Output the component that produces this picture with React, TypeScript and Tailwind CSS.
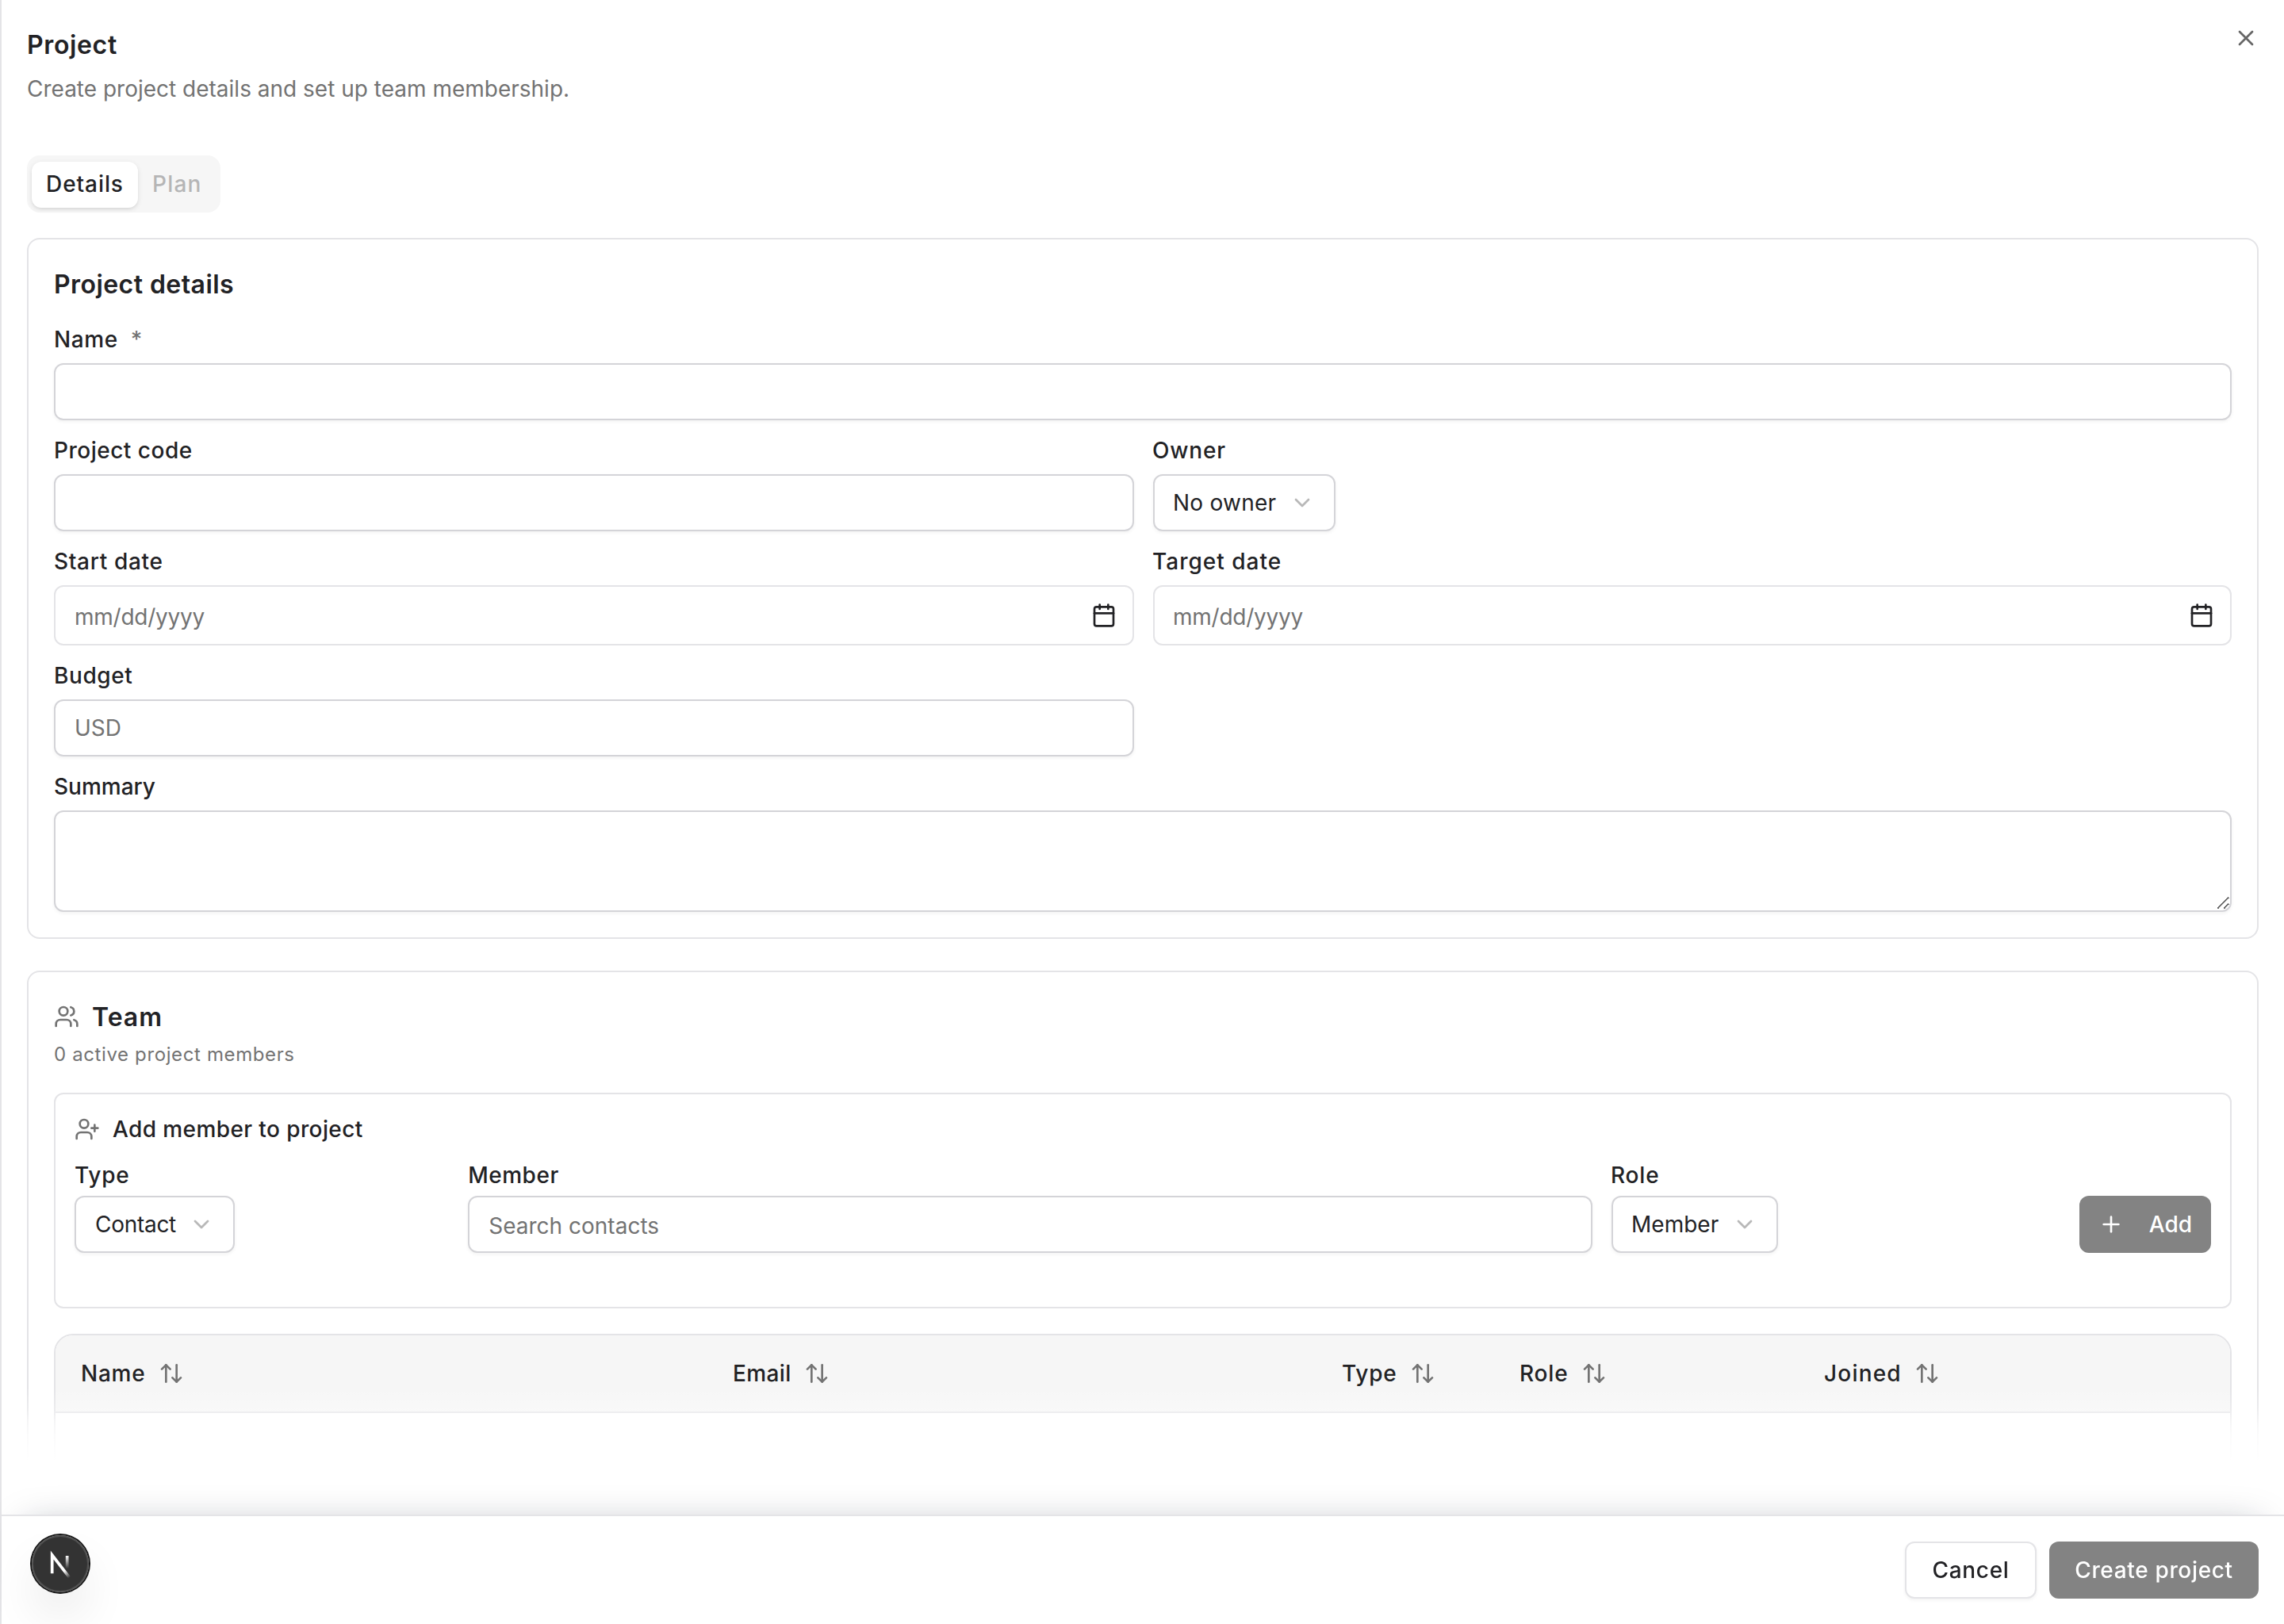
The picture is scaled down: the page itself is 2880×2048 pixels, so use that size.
import React from "react";
import { ArrowUpDown, Calendar, ChevronDown, Plus, UserPlus, Users, X } from "lucide-react";
import { clsx } from "clsx";

const fieldClass =
  "w-full rounded-md border border-[#d4d4d8] bg-white px-3 text-sm shadow-xs outline-none placeholder:text-[#737373]";

interface FieldProps {
  label: string;
  required?: boolean;
  compact?: boolean;
  tracking?: string;
  className?: string;
  children?: React.ReactNode;
}

function Field({ label, required, compact, tracking = "tracking-[0.3px]", className, children }: FieldProps) {
  return (
    <div className={clsx("flex min-w-0 flex-col", compact ? "gap-1.5" : "gap-2", className)}>
      <label className={clsx("flex items-center gap-2 text-sm leading-none font-medium", tracking)}>
        {label}
        {required && <span className="text-[#737373]">*</span>}
      </label>
      {children}
    </div>
  );
}

function SelectButton({ value, className }: { value: string; className?: string }) {
  return (
    <button
      type="button"
      className={clsx(
        "flex h-9 items-center justify-between rounded-md border border-[#d4d4d8] bg-white px-3 text-sm whitespace-nowrap shadow-xs",
        className
      )}
    >
      {value}
      <ChevronDown className="size-4 text-[#737373] opacity-50" />
    </button>
  );
}

function DateInput() {
  return (
    <div className="flex h-[38px] w-full items-center justify-between rounded-md border border-[#e4e4e7] bg-white pr-2.5 pl-3 text-sm">
      <span className="pt-0.5 tracking-[-0.12px] text-[#737373]">mm/dd/yyyy</span>
      <Calendar className="size-4" />
    </div>
  );
}

function NextBadge() {
  return (
    <div className="absolute bottom-5 left-[19px] size-9 rounded-full bg-black/80 shadow-[0_0_0_1px_#171717,inset_0_0_0_1px_rgba(255,255,255,0.14),0_16px_32px_-8px_rgba(0,0,0,0.24)]">
      <svg width="36" height="36" viewBox="0 0 36 36" fill="none">
        <g transform="translate(10.5 11.5)" strokeWidth="1.86">
          <path d="M13.3 15.2 L2.34 1 V12.6" stroke="url(#badge-diagonal)" />
          <path d="M11.825 1.5 V13.1" stroke="url(#badge-stem)" />
        </g>
        <defs>
          <linearGradient id="badge-diagonal" x1="9.95555" y1="11.1226" x2="15.4778" y2="17.9671" gradientUnits="userSpaceOnUse">
            <stop stopColor="white" />
            <stop offset="0.604072" stopColor="white" stopOpacity="0" />
            <stop offset="1" stopColor="white" stopOpacity="0" />
          </linearGradient>
          <linearGradient id="badge-stem" x1="11.8222" y1="1.40039" x2="11.791" y2="9.62542" gradientUnits="userSpaceOnUse">
            <stop stopColor="white" />
            <stop offset="1" stopColor="white" stopOpacity="0" />
          </linearGradient>
        </defs>
      </svg>
    </div>
  );
}

function ProjectDetails() {
  return (
    <section className="rounded-lg border border-[#e4e4e7] p-4">
      <h3 className="mb-4 text-base font-semibold tracking-[0.22px]">Project details</h3>
      <div className="grid grid-cols-2 gap-3">
        <Field label="Name" required className="col-span-2">
          <input className={clsx(fieldClass, "h-9")} />
        </Field>
        <Field label="Project code" tracking="tracking-[0.25px]">
          <input className={clsx(fieldClass, "h-9")} />
        </Field>
        <Field label="Owner" tracking="tracking-[0.4px]">
          <SelectButton value="No owner" className="w-[115px] tracking-[0.12px]" />
        </Field>
        <Field label="Start date" tracking="tracking-[0.34px]">
          <DateInput />
        </Field>
        <Field label="Target date" tracking="tracking-[0.5px]">
          <DateInput />
        </Field>
        <Field label="Budget">
          <input className={clsx(fieldClass, "h-9 pb-0.5")} placeholder="USD" />
        </Field>
        <Field label="Summary" tracking="tracking-normal" className="col-span-2">
          <textarea className={clsx(fieldClass, "block h-16 resize-y py-2")} />
        </Field>
      </div>
    </section>
  );
}

const columns = [
  { title: "Name", tracking: "tracking-[0.38px]" },
  { title: "Email", tracking: "tracking-[0.2px]" },
  { title: "Type", tracking: "tracking-[0.4px]" },
  { title: "Role", tracking: "tracking-[0.4px]" },
  { title: "Joined", tracking: "tracking-[0.6px]" },
];

function TeamSection() {
  return (
    <section className="h-[400px] rounded-lg border border-[#e4e4e7] p-4">
      <div className="flex items-center gap-2">
        <Users className="size-4 text-[#737373]" />
        <h3 className="text-base font-semibold tracking-[0.5px]">Team</h3>
      </div>
      <p className="mt-1 text-xs tracking-[0.31px] text-[#737373]">0 active project members</p>

      <div className="mt-4 rounded-md border border-[#e4e4e7] p-3">
        <div className="mb-3 flex items-center gap-2 text-sm font-medium tracking-[0.2px]">
          <UserPlus className="size-4 text-[#737373]" />
          Add member to project
        </div>
        <div className="grid grid-cols-[1fr_3fr_1.2fr_auto] items-end gap-3 pb-[22px]">
          <Field label="Type" compact tracking="tracking-[0.4px]">
            <SelectButton value="Contact" className="w-[101px] tracking-[-0.14px]" />
          </Field>
          <Field label="Member" compact tracking="tracking-[0.25px]">
            <input className={clsx(fieldClass, "h-9")} placeholder="Search contacts" />
          </Field>
          <Field label="Role" compact tracking="tracking-[0.4px]">
            <SelectButton value="Member" className="w-[105px]" />
          </Field>
          <button
            type="button"
            className="flex h-9 items-center gap-4 rounded-md bg-[#838383] px-3 text-sm font-medium text-white"
          >
            <Plus className="size-4" />
            Add
          </button>
        </div>
      </div>

      {/* Members table, runs on below the footer */}
      <div className="mt-4 h-40 overflow-hidden rounded-xl border border-[#e4e4e7]">
        <div className="grid h-[49px] grid-cols-[411px_384px_112px_192px_1fr] border-b border-[#e4e4e7] bg-[#f6f6f6]">
          {columns.map(({ title, tracking }) => (
            <div key={title} className={clsx("flex items-center gap-2 px-4 text-sm font-medium", tracking)}>
              {title}
              <ArrowUpDown className="size-4 text-[#737373]" />
            </div>
          ))}
        </div>
      </div>
    </section>
  );
}

export default function App() {
  return (
    <div className="h-[2048px] w-[2880px] overflow-hidden bg-white">
      <div className="relative flex h-[1024px] w-[1440px] origin-top-left scale-200 flex-col border-l border-[#e4e4e7] bg-white font-['Inter',sans-serif] text-[#222225]">
        <header className="flex shrink-0 items-start justify-between p-4">
          <div className="flex flex-col gap-1.5">
            <h2 className="text-base font-semibold tracking-[0.32px]">Project</h2>
            <p className="text-sm text-[#737373]">Create project details and set up team membership.</p>
          </div>
          <button type="button" aria-label="Close">
            <X className="size-4 text-[#666]" />
          </button>
        </header>

        <main className="relative min-h-0 flex-1 overflow-hidden p-4">
          <div className="mb-4 flex h-9 w-[122px] items-center rounded-lg bg-[#f6f6f6] p-[3px] text-sm font-medium">
            <button
              type="button"
              className="h-[29px] w-[67px] rounded-md bg-white pl-[9px] text-left tracking-[0.46px] shadow-sm"
            >
              Details
            </button>
            <button type="button" disabled className="h-[29px] pl-[9px] tracking-[0.6px] opacity-30">
              Plan
            </button>
          </div>
          <div className="flex flex-col gap-5">
            <ProjectDetails />
            <TeamSection />
          </div>
          {/* Scroll fade */}
          <div className="absolute inset-x-0 bottom-0 h-20 bg-[linear-gradient(to_bottom,rgba(255,255,255,0),rgba(255,255,255,0.3)_14px,rgba(255,255,255,0.65)_22px,rgba(255,255,255,0.85)_30px,white_46px)]" />
        </main>

        <footer className="relative flex shrink-0 justify-end gap-2 border-t border-[#e4e4e7] bg-white p-4 shadow-[0_-8px_24px_-16px_rgba(15,23,42,0.35)]">
          <button
            type="button"
            className="h-9 w-[83px] rounded-md border border-[#e4e4e7] bg-white text-sm font-medium tracking-[0.35px] shadow-xs"
          >
            Cancel
          </button>
          <button
            type="button"
            className="h-9 w-[132px] rounded-md bg-[#838383] text-sm font-medium tracking-[0.33px] text-white"
          >
            Create project
          </button>
        </footer>
        <NextBadge />
      </div>
    </div>
  );
}
